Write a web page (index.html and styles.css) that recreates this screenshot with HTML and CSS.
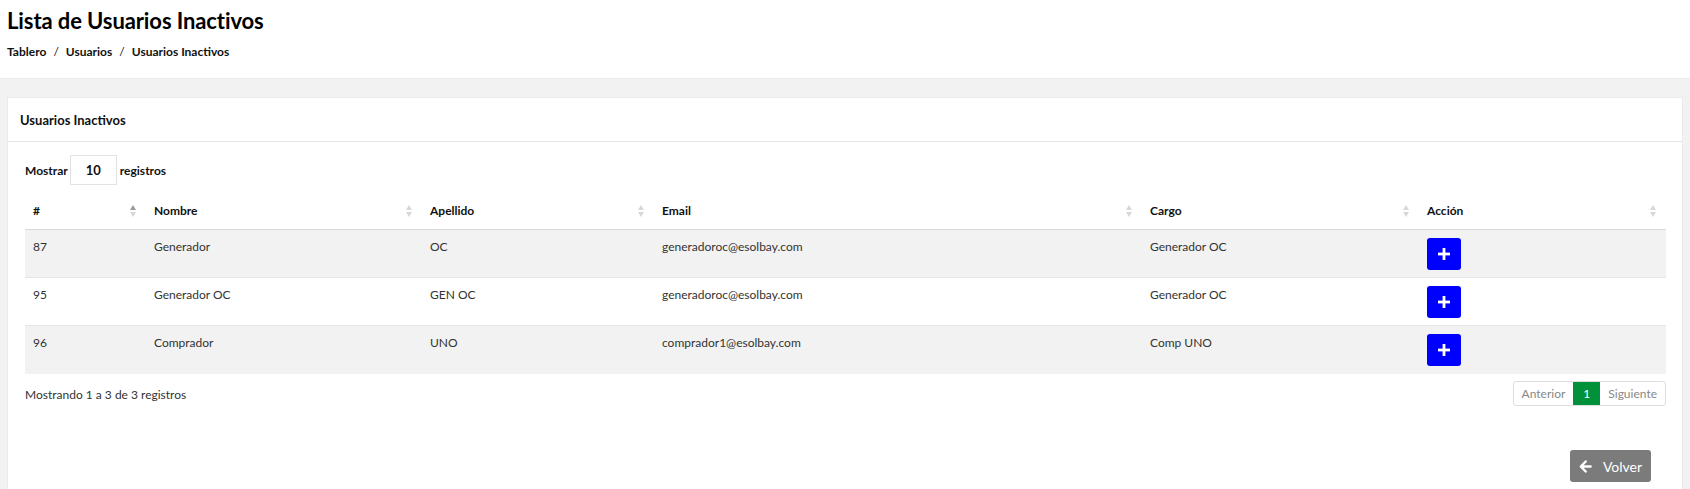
FILE: index.html
```html
<!DOCTYPE html>
<html lang="es">
<head>
<meta charset="utf-8">
<title>Lista de Usuarios Inactivos</title>
<link rel="stylesheet" href="styles.css">
</head>
<body>
<header class="page-header">
  <h1 class="title">Lista de Usuarios Inactivos</h1>
  <nav class="breadcrumb">
    <span>Tablero</span><span class="sep">/</span><span>Usuarios</span><span class="sep">/</span><span>Usuarios Inactivos</span>
  </nav>
</header>
<main class="content">
  <section class="card">
    <div class="card-header">Usuarios Inactivos</div>
    <div class="card-body">
      <div class="length">
        <span>Mostrar</span>
        <span class="length-box">10</span>
        <span>registros</span>
      </div>
      <table class="table">
        <colgroup>
          <col class="c1"><col class="c2"><col class="c3"><col class="c4"><col class="c5"><col class="c6">
        </colgroup>
        <thead>
          <tr>
            <th><div class="th-in"><span>#</span><svg class="sort" viewBox="0 0 6 12"><path class="up on" d="M3 0 L6 5 L0 5 Z"/><path class="down" d="M0 7 L6 7 L3 12 Z"/></svg></div></th>
            <th><div class="th-in"><span>Nombre</span><svg class="sort" viewBox="0 0 6 12"><path class="up" d="M3 0 L6 5 L0 5 Z"/><path class="down" d="M0 7 L6 7 L3 12 Z"/></svg></div></th>
            <th><div class="th-in"><span>Apellido</span><svg class="sort" viewBox="0 0 6 12"><path class="up" d="M3 0 L6 5 L0 5 Z"/><path class="down" d="M0 7 L6 7 L3 12 Z"/></svg></div></th>
            <th><div class="th-in"><span>Email</span><svg class="sort" viewBox="0 0 6 12"><path class="up" d="M3 0 L6 5 L0 5 Z"/><path class="down" d="M0 7 L6 7 L3 12 Z"/></svg></div></th>
            <th><div class="th-in"><span>Cargo</span><svg class="sort" viewBox="0 0 6 12"><path class="up" d="M3 0 L6 5 L0 5 Z"/><path class="down" d="M0 7 L6 7 L3 12 Z"/></svg></div></th>
            <th><div class="th-in"><span>Acción</span><svg class="sort" viewBox="0 0 6 12"><path class="up" d="M3 0 L6 5 L0 5 Z"/><path class="down" d="M0 7 L6 7 L3 12 Z"/></svg></div></th>
          </tr>
        </thead>
        <tbody>
          <tr class="odd">
            <td>87</td><td>Generador</td><td>OC</td><td>generadoroc@esolbay.com</td><td>Generador OC</td>
            <td><button class="btn-add" type="button"><svg viewBox="0 0 12 12"><rect x="4.6" y="0" width="2.8" height="12"/><rect x="0" y="4.6" width="12" height="2.8"/></svg></button></td>
          </tr>
          <tr>
            <td>95</td><td>Generador OC</td><td>GEN OC</td><td>generadoroc@esolbay.com</td><td>Generador OC</td>
            <td><button class="btn-add" type="button"><svg viewBox="0 0 12 12"><rect x="4.6" y="0" width="2.8" height="12"/><rect x="0" y="4.6" width="12" height="2.8"/></svg></button></td>
          </tr>
          <tr class="odd">
            <td>96</td><td>Comprador</td><td>UNO</td><td>comprador1@esolbay.com</td><td>Comp UNO</td>
            <td><button class="btn-add" type="button"><svg viewBox="0 0 12 12"><rect x="4.6" y="0" width="2.8" height="12"/><rect x="0" y="4.6" width="12" height="2.8"/></svg></button></td>
          </tr>
        </tbody>
      </table>
      <div class="table-footer">
        <div class="info">Mostrando 1 a 3 de 3 registros</div>
        <div class="pager">
          <span class="pg">Anterior</span><span class="pg active">1</span><span class="pg">Siguiente</span>
        </div>
      </div>
      <div class="actions">
        <button class="btn-back" type="button"><svg viewBox="0 0 14 14"><path d="M7.2 1.6 L2 7 L7.2 12.4 M2.4 7 L12.5 7" fill="none" stroke="#fff" stroke-width="2.6" stroke-linecap="round" stroke-linejoin="round"/></svg><span>Volver</span></button>
      </div>
    </div>
  </section>
</main>
</body>
</html>
```

FILE: styles.css
```css
* { box-sizing: border-box; }
html, body { margin: 0; padding: 0; }
body {
  font-family: Lato, "Noto Sans", "Liberation Sans", sans-serif;
  background: #f2f2f3;
  color: #333;
  font-size: 12px;
}
.page-header {
  background: #fff;
  height: 79px;
  padding: 8px 7px 0 7px;
  border-bottom: 1px solid #ececee;
}
.title {
  margin: 0;
  font-size: 22px;
  line-height: 26px;
  font-weight: 700;
  color: #000;
  letter-spacing: -0.1px;
}
.breadcrumb {
  margin-top: 10px;
  font-size: 12px;
  line-height: 16px;
  font-weight: 700;
  color: #111;
}
.breadcrumb .sep { padding: 0 7px; font-weight: 400; }
.content {
  padding: 18px 7px 0 7px;
}
.card {
  background: #fff;
  border: 1px solid #ebebed;
  border-bottom: none;
}
.card-header {
  height: 44px;
  display: flex;
  align-items: center;
  padding: 0 12px;
  font-size: 13px;
  font-weight: 700;
  color: #111;
  border-bottom: 1px solid #e4e4e6;
}
.card-body {
  padding: 13px 16px 8px 17px;
}
.length {
  display: flex;
  align-items: center;
  gap: 1px;
  font-weight: 700;
  color: #111;
  font-size: 12px;
}
.length-box {
  width: 47px;
  height: 30px;
  border: 1px solid #e2e2e2;
  display: flex;
  align-items: center;
  justify-content: center;
  font-size: 13px;
  margin: 0 2px 0 1px;
}
.table {
  width: 100%;
  margin-top: 7px;
  border-collapse: collapse;
  table-layout: fixed;
}
col.c1 { width: 121px; }
col.c2 { width: 276px; }
col.c3 { width: 232px; }
col.c4 { width: 488px; }
col.c5 { width: 277px; }
col.c6 { width: 247px; }
.table th {
  text-align: left;
  font-weight: 700;
  color: #111;
  padding: 11px 10px 10px 8px;
  line-height: 16px;
  border-bottom: 1px solid #d9d9d9;
}
.th-in {
  display: flex;
  justify-content: space-between;
  align-items: center;
}
.sort { width: 6px; height: 12px; }
.sort path { fill: #d8d8d8; }
.sort path.on { fill: #9a9a9a; }
.table td {
  padding: 8px 8px 7px 8px;
  vertical-align: top;
  line-height: 18px;
  color: #333;
  border-bottom: 1px solid #e6e6e6;
}
.table tbody tr:last-child td { border-bottom: none; padding-bottom: 8px; }
.table tr.odd td { background: #f2f2f2; }
.btn-add {
  width: 34px;
  height: 32px;
  margin: 0;
  border: none;
  border-radius: 3px;
  background: #0000ff;
  display: flex;
  align-items: center;
  justify-content: center;
  padding: 0;
}
.btn-add svg { width: 12px; height: 12px; fill: #fff; }
.table-footer {
  display: flex;
  justify-content: space-between;
  align-items: center;
  margin-top: 7px;
}
.info { color: #333; font-size: 12px; padding-top: 1px; }
.pager {
  display: flex;
  border: 1px solid #dedede;
  border-radius: 3px;
  height: 25px;
  overflow: hidden;
}
.pg {
  display: flex;
  align-items: center;
  padding: 0 8px;
  color: #888;
  font-size: 12px;
}
.pg.active {
  background: #00913a;
  color: #fff;
  padding: 0 10px;
}
.actions {
  display: flex;
  justify-content: flex-end;
  padding-right: 15px;
  margin-top: 44px;
}
.btn-back {
  width: 81px;
  height: 32px;
  border: none;
  border-radius: 3px;
  background: #7b7b7b;
  color: #fff;
  font-family: inherit;
  font-size: 14px;
  display: flex;
  align-items: center;
  justify-content: center;
  gap: 11px;
  padding: 0;
}
.btn-back svg { width: 13px; height: 13px; }
```
